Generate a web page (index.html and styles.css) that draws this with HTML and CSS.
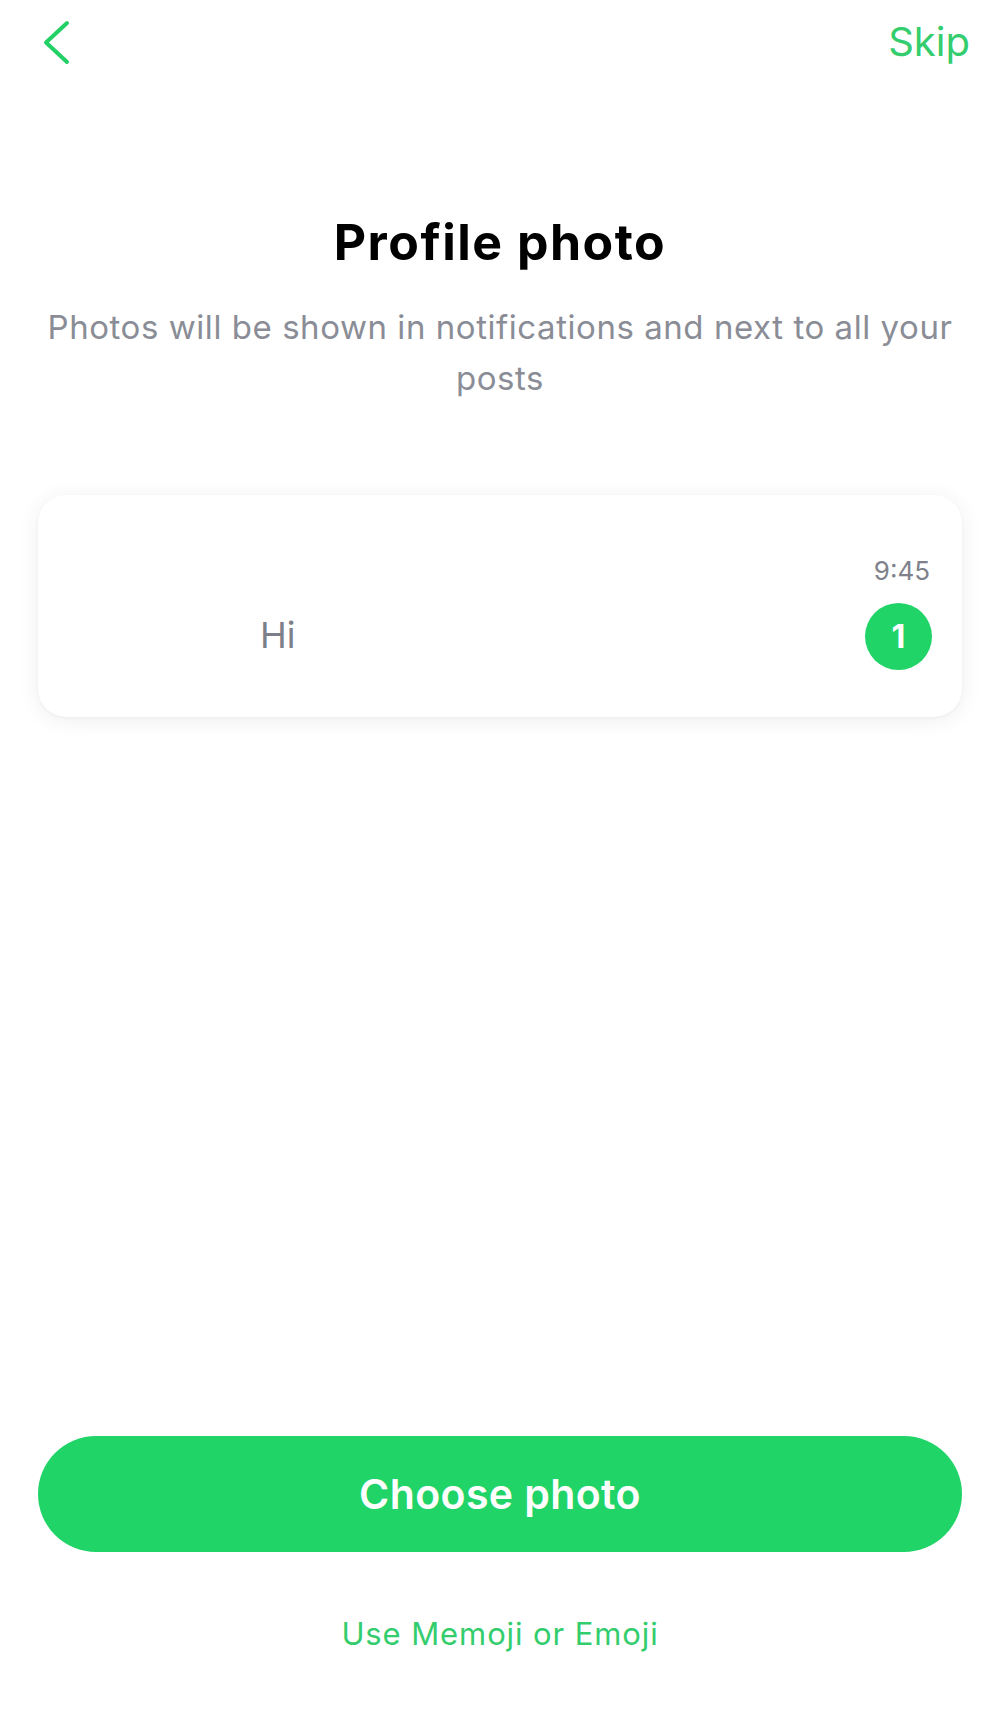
FILE: index.html
```html
<!DOCTYPE html>
<html lang="en">
<head>
<meta charset="utf-8">
<title>Profile photo</title>
<link rel="stylesheet" href="styles.css">
</head>
<body>
<div class="screen">
  <header class="topbar">
    <button class="back" aria-label="Back">
      <svg width="30" height="50" viewBox="0 0 30 50" fill="none" stroke="currentColor" stroke-width="4" stroke-linecap="round" stroke-linejoin="round"><polyline points="25,6 4,25.5 25,45"/></svg>
    </button>
    <a class="skip">Skip</a>
  </header>

  <h1 class="title">Profile photo</h1>
  <p class="subtitle">Photos will be shown in notifications and next to all your posts</p>

  <div class="card">
    <div class="time">9:45</div>
    <div class="row">
      <span class="msg">Hi</span>
      <span class="badge">1</span>
    </div>
  </div>

  <div class="spacer"></div>

  <button class="primary">Choose photo</button>
  <a class="secondary">Use Memoji or Emoji</a>
</div>
</body>
</html>
```

FILE: styles.css
```css
* { box-sizing: border-box; }
html, body { margin: 0; padding: 0; background: #fff; }
body {
  font-family: Inter, "Noto Sans", "Liberation Sans", sans-serif;
  -webkit-font-smoothing: antialiased;
}
.screen {
  width: 1000px;
  height: 1719px;
  display: flex;
  flex-direction: column;
  overflow: hidden;
}
.topbar {
  height: 84px;
  display: flex;
  align-items: center;
  justify-content: space-between;
  padding: 0 30px 0 42px;
}
.back {
  border: 0;
  background: none;
  padding: 0;
  width: 30px;
  height: 50px;
  color: #22d066;
  display: block;
}
.back svg { display: block; }
.skip {
  font-size: 40px;
  line-height: 48px;
  color: #34cd6d;
  margin-bottom: 0;
}
.title {
  margin: 129px 0 0;
  font-size: 50px;
  line-height: 58px;
  font-weight: 700;
  color: #000;
  text-align: center;
  letter-spacing: 1.5px;
}
.subtitle {
  margin: 31px 0 0;
  padding: 0 30px;
  font-size: 33px;
  line-height: 51px;
  color: #8a8d96;
  text-align: center;
  letter-spacing: 0.55px;
}
.card {
  margin: 91px 38px 0;
  height: 222px;
  border-radius: 28px;
  background: #fff;
  box-shadow: 0 3px 22px rgba(0,0,0,0.07), 0 1px 3px rgba(0,0,0,0.04);
  padding: 60px 30px 0 222px;
  display: flex;
  flex-direction: column;
}
.time {
  align-self: flex-end;
  font-size: 26px;
  line-height: 32px;
  color: #7f828b;
  margin-right: 2px;
}
.row {
  margin-top: 16px;
  display: flex;
  align-items: center;
  justify-content: space-between;
}
.msg {
  font-size: 36px;
  line-height: 40px;
  color: #7d8089;
  margin-top: -4px;
}
.badge {
  width: 67px;
  height: 67px;
  border-radius: 50%;
  background: #21d468;
  color: #fff;
  font-size: 32px;
  font-weight: 700;
  display: flex;
  align-items: center;
  justify-content: center;
}
.spacer { flex: 1; }
.primary {
  margin: 0 38px;
  height: 116px;
  border: 0;
  border-radius: 58px;
  background: #21d468;
  color: #fff;
  font-family: inherit;
  font-size: 41px;
  font-weight: 600;
  letter-spacing: 0.4px;
  padding: 0;
}
.secondary {
  margin: 62px 0 65px;
  font-size: 31px;
  line-height: 40px;
  text-align: center;
  color: #34cd6d;
  letter-spacing: 0.9px;
}
```
